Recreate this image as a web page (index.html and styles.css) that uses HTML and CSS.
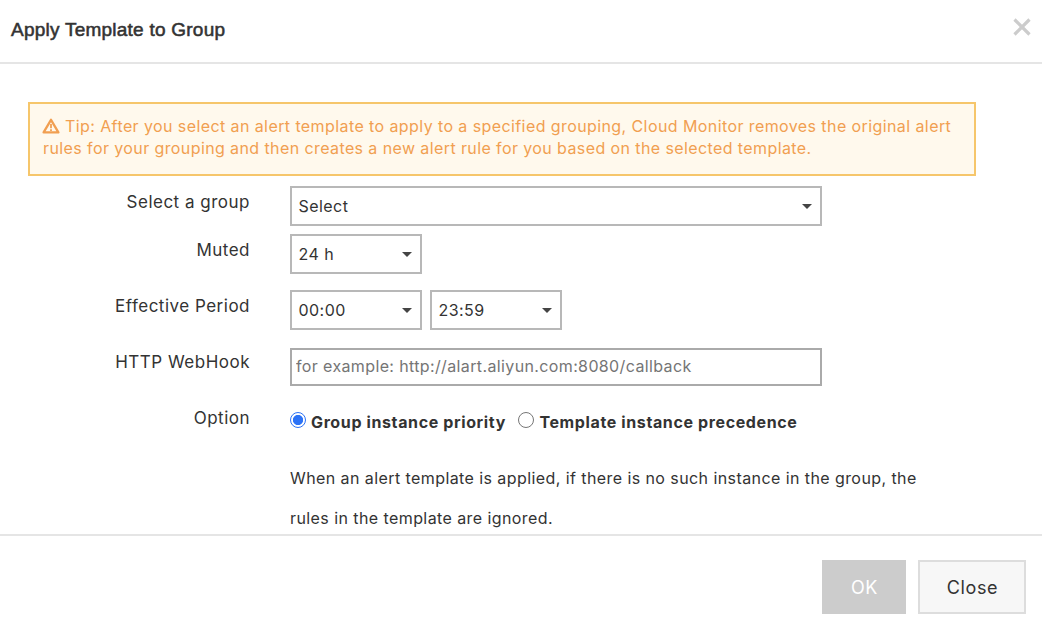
FILE: index.html
```html
<!DOCTYPE html>
<html lang="en">
<head>
<meta charset="utf-8">
<title>Apply Template to Group</title>
<link rel="stylesheet" href="styles.css">
</head>
<body>
<div class="dialog">
  <header class="dialog-header">
    <h1 class="dialog-title">Apply Template to Group</h1>
    <svg class="dialog-close" viewBox="0 0 18 18" aria-label="Close"><path d="M1.5 1.5L16.5 16.5M16.5 1.5L1.5 16.5"/></svg>
  </header>
  <main class="dialog-body">
    <div class="tip">
      <svg class="tip-icon" viewBox="0 0 18 16"><path class="tip-outline" d="M9 1.8L16.4 14.4H1.6Z"/><path class="tip-mark" d="M9 6V10.3M9 11.3V13"/></svg><span class="tip-first">Tip: After you select an alert template to apply to a specified grouping, Cloud Monitor removes the original alert</span><br>
      <span class="tip-second">rules for your grouping and then creates a new alert rule for you based on the selected template.</span>
    </div>
    <div class="row row-group">
      <span class="label">Select a group</span>
      <div class="select select-wide"><span>Select</span><i class="caret"></i></div>
    </div>
    <div class="row row-muted">
      <span class="label">Muted</span>
      <div class="select"><span>24 h</span><i class="caret"></i></div>
    </div>
    <div class="row row-period">
      <span class="label">Effective Period</span>
      <div class="select"><span>00:00</span><i class="caret"></i></div>
      <div class="select select-second"><span>23:59</span><i class="caret"></i></div>
    </div>
    <div class="row row-hook">
      <span class="label">HTTP WebHook</span>
      <input class="input" type="text" placeholder="for example: http://alart.aliyun.com:8080/callback">
    </div>
    <div class="row row-option">
      <span class="label">Option</span>
      <span class="radio radio-on"></span><b class="option-name">Group instance priority</b>
      <span class="radio radio-second"></span><b class="option-name">Template instance precedence</b>
    </div>
    <p class="note"><span class="note-first">When an alert template is applied, if there is no such instance in the group, the</span><br><span class="note-second">rules in the template are ignored.</span></p>
  </main>
  <footer class="dialog-footer">
    <button class="button button-ok">OK</button>
    <button class="button button-close">Close</button>
  </footer>
</div>
</body>
</html>
```
FILE: styles.css
```css
* { box-sizing: border-box; }
body { margin: 0; background: #fff; color: #333; font: 16px/22px Inter, sans-serif; }
.dialog { display: flex; flex-direction: column; width: 1042px; height: 628px; overflow: hidden; white-space: nowrap; }
.dialog-header { display: flex; justify-content: space-between; height: 64px; padding: 18px 11px 0 11px; border-bottom: 2px solid #e5e5e5; }
.dialog-title { margin: 0; font: 400 19px/24px "Liberation Sans", sans-serif; letter-spacing: .24px; -webkit-text-stroke: .55px #333; }
.dialog-close { width: 18px; height: 18px; stroke: #ccc; stroke-width: 3.2; }
.dialog-body { height: 470px; padding-top: 38px; }
.tip { width: 948px; height: 74px; margin-left: 28px; padding: 11px 0 0 13px; border: 2px solid #f6c66b; background: #fff9ed; color: #f19f51; }
.tip-icon { width: 18px; height: 16px; margin: 0 5px 0 -1px; vertical-align: -2px; fill: none; }
.tip-outline { stroke: #f19f51; stroke-width: 2.3; stroke-linejoin: round; }
.tip-mark { stroke: #f19f51; stroke-width: 1.8; }
.tip-first { letter-spacing: .41px; }
.tip-second { letter-spacing: .4px; }
.row { display: flex; }
.row-group { height: 48px; padding-top: 10px; }
.row-muted { height: 56px; padding-top: 10px; }
.row-period { height: 56px; padding-top: 10px; }
.row-hook { height: 56px; padding-top: 12px; }
.row-option { height: 66px; padding-top: 10px; }
.label { width: 250px; margin-right: 40px; padding-top: 5px; font-size: 17px; letter-spacing: .5px; text-align: right; }
.row-hook .label { padding-top: 3px; }
.select { display: flex; justify-content: space-between; width: 132px; height: 40px; padding: 7px 8px 0 6.5px; border: 2px solid #b8b8b8; letter-spacing: .45px; }
.select-wide { width: 532px; }
.select-second { margin-left: 8px; }
.caret { width: 10px; height: 5px; margin-top: 9px; background: #444; clip-path: polygon(0 0, 100% 0, 50% 100%); }
.input { width: 532px; height: 38px; padding: 0 4px 2px; border: 2px solid #aaa; font: 16px/22px Inter, sans-serif; letter-spacing: .37px; }
.input::placeholder { color: #757575; }
.radio { width: 16px; height: 16px; margin-top: 10px; border: 1px solid #767676; border-radius: 50%; }
.radio-on { border-color: #2b72f6; background: radial-gradient(circle, #2b72f6 4.7px, #fff 5.5px); }
.radio-second { margin-left: 12.5px; }
.option-name { margin: 9px 0 0 5px; font-weight: 700; letter-spacing: .62px; }
.note { margin: 0 0 0 290px; line-height: 40px; }
.note-first { letter-spacing: .42px; }
.note-second { letter-spacing: .42px; }
.dialog-footer { display: flex; gap: 12px; justify-content: flex-end; height: 94px; padding: 24px 16px 0 0; border-top: 2px solid #e5e5e5; }
.button { height: 54px; padding: 2px 0 0 1px; font: 18px/22px Inter, sans-serif; letter-spacing: .6px; }
.button-ok { width: 84px; border: 0; background: #ccc; color: #fff; }
.button-close { width: 108px; border: 2px solid #ddd; background: #f7f7f7; color: #333; }
```
